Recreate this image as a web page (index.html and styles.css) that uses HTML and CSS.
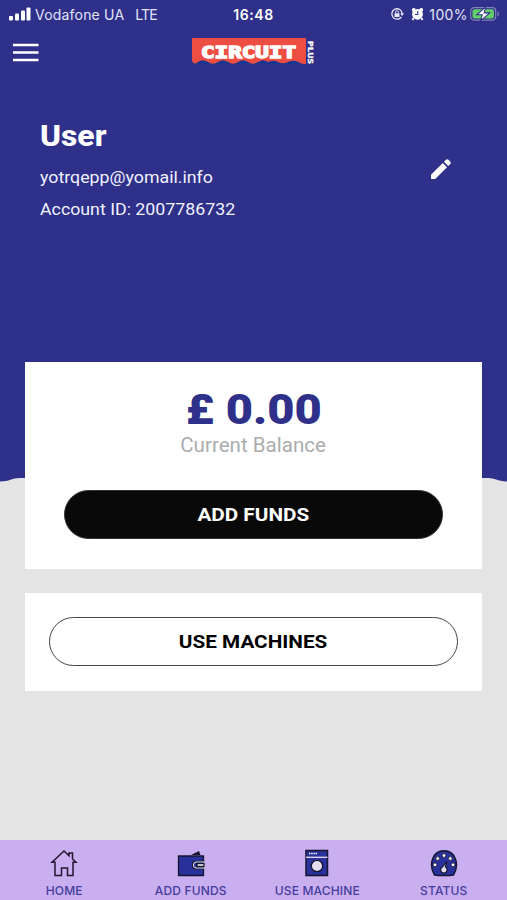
FILE: index.html
```html
<!DOCTYPE html>
<html lang="en">
<head>
<meta charset="utf-8">
<title>Circuit Plus</title>
<link rel="stylesheet" href="styles.css">
</head>
<body>
<div class="app">
  <header class="hero">
    <div class="status-bar">
      <div class="carrier">
        <svg width="22" height="14" viewBox="0 0 22 14" fill="#fff"><rect x="0" y="9" width="4" height="4.500" rx="1"/><rect x="6" y="6.500" width="4" height="7" rx="1"/><rect x="12" y="3.500" width="4" height="10" rx="1"/><rect x="17.500" y="0.500" width="4" height="13" rx="1"/></svg>
        <span class="carrier-name">Vodafone UA</span>
        <span class="network">LTE</span>
      </div>
      <div class="time">16:48</div>
      <div class="indicators">
        <svg class="lock" width="14" height="14" viewBox="0 0 14 14"><path d="M11.400 9.800A5.200 5.200 0 1 1 12.200 6.500" fill="none" stroke="#e8e9fa" stroke-width="1.300"/><path d="M10.200 6.300h3.800L12.100 9z" fill="#e8e9fa"/><rect x="4.500" y="6.300" width="5" height="3.700" rx=".5" fill="#e8e9fa"/><path d="M5.500 6.500V5.300a1.500 1.500 0 0 1 3 0v1.200" fill="none" stroke="#e8e9fa"/></svg>
        <svg class="alarm" width="13" height="14" viewBox="0 0 13 14"><path d="M2.500 11l-1 2M10.500 11l1 2" stroke="#fff" stroke-width="1.800"/><circle cx="2.800" cy="3" r="2" fill="#fff"/><circle cx="10.200" cy="3" r="2" fill="#fff"/><circle cx="6.500" cy="7.300" r="5.400" fill="#fff"/><path d="M6.800 4v3.500H4" fill="none" stroke="#2e3089" stroke-width="1.100"/></svg>
        <span class="percent">100%</span>
        <svg class="battery" width="30" height="16" viewBox="0 0 30 16"><rect x=".7" y="1.600" width="25" height="12.500" rx="3.500" fill="none" stroke="#8183b8" stroke-width="1.200"/><path d="M27.500 5.500c2 .8 2 4 0 4.800z" fill="#8183b8"/><rect x="2.500" y="3.300" width="21.400" height="9.100" rx="2" fill="#63cf68"/><path d="M15.700.8L6.800 8.800h5.400L10.500 15l9.200-8.100h-5.500z" fill="#fff" stroke="#2e3089" stroke-width="1.100"/></svg>
      </div>
    </div>
    <div class="nav">
      <svg class="menu" width="26" height="20" viewBox="0 0 26 20" stroke="#fff" stroke-width="2.300"><path d="M0 2h25.500M0 9.500h25.500M0 17h25.500"/></svg>
      <svg class="logo" width="124" height="30" viewBox="0 0 124 30">
        <path d="M0 24h114v3q-5 1.500-10-1q-6 3-12 0q-6 3-12 0q-6 3-12 0q-6 3-12 0q-6 3-12 0q-6 3-12 0q-6 3-12 0q-6 3-10 0q-6 2-10 0z" fill="#173692"/>
        <path d="M0 1h114v26q-4 .5-8-2t-10 0t-10 0t-10 0q-5-3.500-10 0t-10 0q-5-3.500-10 0t-10 0q-5-3.500-10 0t-10 0Q10 21.500 6 25T0 24z" fill="#ee4d41"/>
        <text class="logo-word" x="9" y="20.500" textLength="95" lengthAdjust="spacingAndGlyphs">CIRCUIT</text>
        <text class="logo-plus" transform="translate(115.800 4) rotate(90)" textLength="23" lengthAdjust="spacingAndGlyphs">PLUS</text>
      </svg>
    </div>
    <div class="profile">
      <div class="profile-text">
        <h1>User</h1>
        <p class="email">yotrqepp@yomail.info</p>
        <p class="account">Account ID: 2007786732</p>
      </div>
      <svg class="edit" width="22" height="22" viewBox="0 0 22 22" fill="#fff"><path d="M1 16.800L12.800 5l4.200 4.200L5.200 21H1zM14 3.800l2-2c.8-.8 1.700-.8 2.500 0l1.700 1.700c.8.800.8 1.700 0 2.500l-2 2z"/></svg>
    </div>
  </header>
  <svg class="wave" width="507" height="6" viewBox="0 0 507 6"><path d="M0 0H507V5.500C497 5 494 1.800 488 2H19C13 2 9 5.500 0 5.500z" fill="#2e3089"/></svg>
  <main class="cards">
    <section class="card balance">
      <div class="amount">£ 0.00</div>
      <div class="caption">Current Balance</div>
      <button class="btn solid"><span>ADD FUNDS</span></button>
    </section>
    <section class="card machines">
      <button class="btn outline"><span>USE MACHINES</span></button>
    </section>
  </main>
  <nav class="tabs">
    <a class="tab"><svg width="28" height="28" viewBox="0 0 28 28" fill="none" stroke="#26152f" stroke-width="1.500"><path d="M2 13.300L14 2l5 4.700V4h3.500v6L26 13.300h-3V26.500h-5.500V19h-6v7.500H5V13.300z"/></svg><span>HOME</span></a>
    <a class="tab"><svg width="28" height="28" viewBox="0 0 28 28"><path d="M14 6l8-4 1.500 4z" fill="#17142e"/><path d="M1.500 7H26.500v5.300H18.500c-4 0-4 7.400 0 7.400h8V26.500H1.500z" fill="#29319a" stroke="#17142e" stroke-width="1.300"/><path d="M27 13h-8c-3.400 0-3.400 6 0 6h8z" fill="#29319a" stroke="#eee" stroke-width="1"/><path d="M20 14.500h7v3h-7z" fill="#fff" stroke="#17142e" stroke-width="1.300"/></svg><span>ADD FUNDS</span></a>
    <a class="tab"><svg width="28" height="28" viewBox="0 0 28 28"><rect x="3" y="1.500" width="21.500" height="25" fill="#29319a" stroke="#17142e" stroke-width="1.500"/><path d="M3 8.300h21.500" stroke="#e9dcfb" stroke-width="1.300"/><path d="M6 4.500h8" stroke="#fff" stroke-width="1.400" stroke-dasharray="1.400 .8"/><circle cx="14" cy="17" r="5.700" fill="#e4dcef" stroke="#17142e" stroke-width="1.300"/></svg><span>USE MACHINE</span></a>
    <a class="tab"><svg width="28" height="28" viewBox="0 0 28 28"><path d="M4.500 26C-1.500 16 2 1.800 14 1.800S29.500 16 23.500 26c-4 .8-15 .8-19 0z" fill="#29319a" stroke="#17142e" stroke-width="1.500"/><g fill="#fff" stroke="#17142e" stroke-width=".8"><circle cx="5" cy="15.800" r="1.900"/><circle cx="7.700" cy="9.500" r="1.900"/><circle cx="14" cy="6.500" r="1.900"/><circle cx="20.300" cy="9.500" r="1.900"/><circle cx="23" cy="15.800" r="1.900"/></g><path d="M16.800 12.500L15.400 18a3.200 3.200 0 1 1-3 0z" fill="#e4dcef" stroke="#17142e" stroke-width="1.200"/></svg><span>STATUS</span></a>
  </nav>
</div>
</body>
</html>
```
FILE: styles.css
```css
* { box-sizing: border-box; }
body { margin: 0; font-family: Roboto, "Liberation Sans", sans-serif; }
svg { display: block; flex: none; }
h1, p { margin: 0; }
.app { width: 507px; height: 900px; background: #e4e4e4; display: flex; flex-direction: column; overflow: hidden; }
.hero { height: 477px; flex: none; background: #2e3089; color: #fff; }
.wave { margin-top: -1px; }
.status-bar { height: 28px; display: grid; grid-template-columns: 1fr auto 1fr; align-items: center; padding: 0 7px 0 9px; font-family: Inter, "Liberation Sans", sans-serif; font-size: 14px; color: #e2e4f8; white-space: nowrap; }
.carrier, .indicators { display: flex; align-items: center; }
.carrier-name { margin-left: 4px; letter-spacing: .2px; }
.network { margin-left: 11px; letter-spacing: -.8px; }
.time { font-weight: 600; color: #fff; letter-spacing: .6px; margin-right: 2px; }
.indicators { justify-content: flex-end; }
.alarm { margin-left: 7px; }
.percent { margin: 0 2px 0 5px; letter-spacing: .4px; }
.nav { height: 52px; position: relative; padding: 15px 13px 0; }
.logo { position: absolute; left: 192px; top: 9px; }
.logo-word { font: bold 16.500px "DejaVu Sans Mono", monospace; fill: #fff; stroke: #fff; stroke-width: 1.400px; }
.logo-plus { font: bold 7px "DejaVu Sans Mono", monospace; fill: #fff; stroke: #fff; stroke-width: .3px; }
.profile { display: flex; justify-content: space-between; padding: 37px 55px 0 40px; }
h1 { font-size: 30px; line-height: 38px; font-weight: 800; transform: scaleX(1.06); transform-origin: left; }
.email, .account { font-size: 17px; line-height: 32px; color: #f0f1ff; transform: scaleX(1.045); transform-origin: left; }
.email { margin-top: 6px; }
.edit { margin-top: 41px; }
.cards { margin: -120px 25px 0; flex: 1; display: flex; flex-direction: column; gap: 24px; position: relative; }
.card { background: #fff; display: flex; flex-direction: column; align-items: center; }
.balance { height: 206.500px; padding: 24px 39px 0; }
.amount { font-size: 42px; line-height: 48px; font-weight: 900; color: #2e3089; transform: scaleX(1.12); }
.caption { font-size: 19.500px; line-height: 24px; color: #acacac; transform: scaleX(1.055); }
.btn { height: 49px; width: 100%; border-radius: 25px; font: 700 19px Roboto, "Liberation Sans", sans-serif; padding: 0; }
.btn span { display: inline-block; transform: scaleX(1.09); }
.solid { background: #090909; border: 1px solid #333; color: #fff; margin-top: 32px; }
.machines { height: 98px; padding: 24px 24px 0; }
.outline { background: #fff; border: 1.500px solid #444; color: #000; }
.tabs { height: 60px; flex: none; display: grid; grid-template-columns: repeat(4, 1fr); background: #c9aef0; font-family: Inter, "Liberation Sans", sans-serif; padding-left: 1px; }
.tab { display: flex; flex-direction: column; align-items: center; padding-top: 9px; color: #453d9c; font-size: 12px; line-height: 16px; font-weight: 500; letter-spacing: .15px; white-space: nowrap; }
.tab span { margin-top: 6px; }
```
